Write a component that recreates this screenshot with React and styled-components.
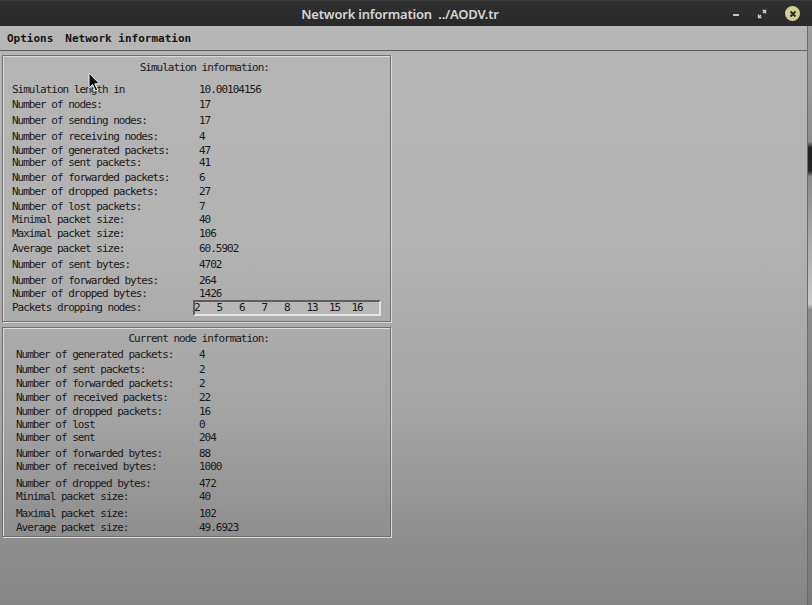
import React from 'react';
import styled, { createGlobalStyle } from 'styled-components';

const GlobalStyle = createGlobalStyle`
  html, body {
    margin: 0;
    padding: 0;
    overflow: hidden;
    background: #2e2e2e;
  }
`;

// [label, value, gap above the row]
const simulationRows = [
  ['Simulation length in', '10.00104156', 10],
  ['Number of nodes:', '17', 3],
  ['Number of sending nodes:', '17', 4],
  ['Number of receiving nodes:', '4', 3.5],
  ['Number of generated packets:', '47', 2],
  ['Number of sent packets:', '41', 0],
  ['Number of forwarded packets:', '6', 3.5],
  ['Number of dropped packets:', '27', 1.5],
  ['Number of lost packets:', '7', 3],
  ['Minimal packet size:', '40', 1.5],
  ['Maximal packet size:', '106', 2],
  ['Average packet size:', '60.5902', 3],
  ['Number of sent bytes:', '4702', 3.5],
  ['Number of forwarded bytes:', '264', 4],
  ['Number of dropped bytes:', '1426', 1.5],
];

const nodeRows = [
  ['Number of generated packets:', '4', 4],
  ['Number of sent packets:', '2', 3.3],
  ['Number of forwarded packets:', '2', 1.4],
  ['Number of received packets:', '22', 2.3],
  ['Number of dropped packets:', '16', 2],
  ['Number of lost', '0', 1.3],
  ['Number of sent', '204', 1],
  ['Number of forwarded bytes:', '88', 4],
  ['Number of received bytes:', '1000', 0.7],
  ['Number of dropped bytes:', '472', 4.7],
  ['Minimal packet size:', '40', 1],
  ['Maximal packet size:', '102', 5],
  ['Average packet size:', '49.6923', 2.3],
];

const droppingNodes = '2   5   6   7   8   13  15  16';

export default function App() {
  return (
    <>
      <GlobalStyle />
      <Window>
        <TitleBar>
          <span />
          <Title>Network information&nbsp; ../AODV.tr</Title>
          <Controls>
            <Minimize />
            <svg width="10" height="10" viewBox="0 0 10 10">
              <path d="M5.5 1.5 H8.5 V4.5 M8.5 1.5 L6 4 M4.5 8.5 H1.5 V5.5 M1.5 8.5 L4 6" stroke="#cfcfcf" strokeWidth="1.3" fill="none" />
            </svg>
            <CloseButton>
              <svg width="8" height="8" viewBox="0 0 8 8">
                <path d="M1.5 1.5 L6.5 6.5 M6.5 1.5 L1.5 6.5" stroke="#2b2b1e" strokeWidth="1.8" />
              </svg>
            </CloseButton>
          </Controls>
        </TitleBar>

        <Body>
          <Column>
            <MenuBar>
              <MenuItem>Options</MenuItem>
              <MenuItem>Network information</MenuItem>
            </MenuBar>

            <Main>
              <Panel $padTop={6} $padBottom={5} $padLeft={9}>
                <PanelTitle>Simulation information:</PanelTitle>
                {simulationRows.map(([label, value, gap]) => (
                  <Row key={label} $gap={gap} $labelWidth={187}>
                    <span>{label}</span>
                    <span>{value}</span>
                  </Row>
                ))}
                <Row $gap={0} $labelWidth={187} $tall>
                  <span>Packets dropping nodes:</span>
                  <Entry>{droppingNodes}</Entry>
                </Row>
              </Panel>

              <Panel $padTop={5} $padBottom={2} $padLeft={13}>
                <PanelTitle>Current node information:</PanelTitle>
                {nodeRows.map(([label, value, gap]) => (
                  <Row key={label + value} $gap={gap} $labelWidth={183}>
                    <span>{label}</span>
                    <span>{value}</span>
                  </Row>
                ))}
              </Panel>

              <Cursor width="13" height="20" viewBox="0 0 13 20">
                <path d="M1 1 L1 16 L4.5 12.5 L7.5 19 L9.8 18 L6.8 11.8 L11.5 11.8 Z" fill="#111" stroke="#eee" strokeWidth="1" />
              </Cursor>
            </Main>
          </Column>
          <EdgeStrip />
        </Body>
      </Window>
    </>
  );
}

const Window = styled.div`
  width: 812px;
  height: 605px;
  display: flex;
  flex-direction: column;
  overflow: hidden;
`;

const TitleBar = styled.div`
  height: 26px;
  flex: none;
  display: grid;
  grid-template-columns: 1fr auto 1fr;
  align-items: center;
  background: linear-gradient(#2f2f2f, #2a2a2a);
  border-top: 1px solid #3a3a3a;
  box-sizing: border-box;
`;

const Title = styled.span`
  font-family: 'Noto Sans', 'DejaVu Sans', sans-serif;
  font-size: 13px;
  font-weight: 600;
  color: #d6d6d6;
  letter-spacing: -0.2px;
  padding-right: 12px;
`;

const Controls = styled.div`
  display: flex;
  align-items: center;
  justify-content: flex-end;
  gap: 18px;
  padding-right: 12px;
`;

const Minimize = styled.span`
  width: 6px;
  height: 2px;
  background: #c4c4c4;
  margin-top: 2px;
`;

const CloseButton = styled.span`
  width: 15px;
  height: 15px;
  border-radius: 50%;
  background: #cfcf95;
  display: flex;
  align-items: center;
  justify-content: center;
`;

const Body = styled.div`
  flex: 1;
  display: flex;
  min-height: 0;
`;

const Column = styled.div`
  flex: 1;
  display: flex;
  flex-direction: column;
`;

const MenuBar = styled.div`
  height: 25px;
  flex: none;
  box-sizing: border-box;
  display: flex;
  align-items: center;
  padding-left: 1px;
  background: #b6b6b6;
  border-bottom: 1px solid #5c5c5c;
`;

const MenuItem = styled.span`
  padding: 0 6px;
  font-family: 'DejaVu Sans Mono', 'Liberation Mono', monospace;
  font-size: 11px;
  font-weight: bold;
  color: #141414;
`;

const Main = styled.div`
  position: relative;
  flex: 1;
  display: flex;
  flex-direction: column;
  align-items: flex-start;
  gap: 5px;
  padding: 4px 0 0 2px;
  background: linear-gradient(#b5b5b5 0%, #b2b2b2 35%, #a4a4a4 65%, #8c8c8c 90%, #858585 100%);
`;

const Panel = styled.section`
  width: 389px;
  box-sizing: border-box;
  border: 1px solid #707070;
  box-shadow: inset 1px 1px 0 #dadada, 1px 1px 0 #d8d8d8;
  padding: ${(p) => p.$padTop}px 6px ${(p) => p.$padBottom}px ${(p) => p.$padLeft}px;
  font-family: 'DejaVu Sans Mono', 'Liberation Mono', monospace;
  font-size: 11px;
  letter-spacing: -1px;
  color: #1a1a1a;
`;

const PanelTitle = styled.div`
  height: 12px;
  line-height: 12px;
  text-align: right;
  padding-right: 115px;
`;

const Row = styled.div`
  display: grid;
  grid-template-columns: ${(p) => p.$labelWidth}px 1fr;
  align-items: center;
  margin-top: ${(p) => p.$gap}px;
  height: ${(p) => (p.$tall ? 16 : 12)}px;
  line-height: 12px;
  white-space: pre;
`;

const Entry = styled.div`
  margin-left: -6px;
  width: 188px;
  height: 16px;
  box-sizing: border-box;
  border-style: solid;
  border-width: 2px;
  border-color: #5e5e5e #e4e4e4 #e4e4e4 #5e5e5e;
  background: #b8b8b8;
  line-height: 12px;
  margin-right: 0;
  text-indent: -1px;
  white-space: pre;
  overflow: hidden;
`;

const Cursor = styled.svg`
  position: absolute;
  left: 88px;
  top: 21px;
`;

const EdgeStrip = styled.div`
  width: 4px;
  flex: none;
  background: linear-gradient(
    #9c9c9c 0%,
    #8e8e8e 20%,
    #232323 21%,
    #262626 25%,
    #8a8a8a 26%,
    #c9c9c9 48%,
    #8a8a8a 49%,
    #7b7b7b 100%
  );
  border-left: 1px solid #6a6a6a;
`;
